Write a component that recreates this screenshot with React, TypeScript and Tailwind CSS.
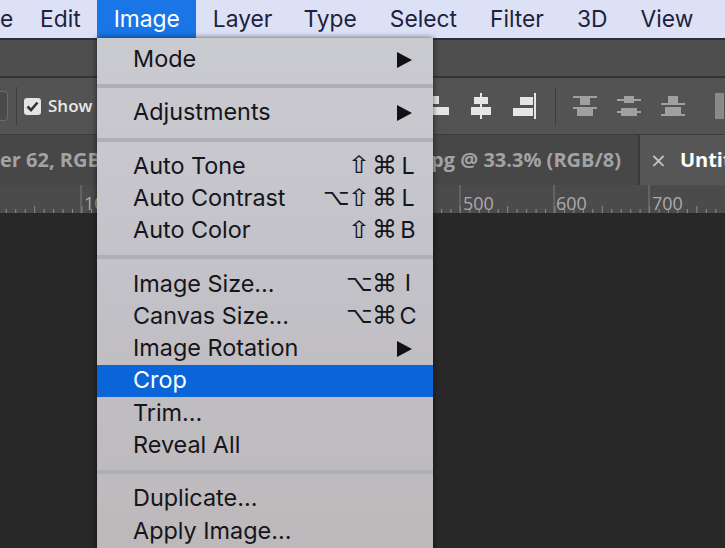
import React from 'react';

const Arrow: React.FC = () => (
  <svg width="15" height="16" viewBox="0 0 15 16" className="shrink-0">
    <path d="M0 0 L15 8 L0 16 Z" fill="#111" />
  </svg>
);

const KeyGlyph: React.FC<{ k: string }> = ({ k }) => {
  if (k === '⌥') return <span className="w-[22px] text-center font-['DejaVu_Sans',sans-serif] text-[23px]">⌥</span>;
  if (k === '⇧') return <span className="w-[19px] scale-x-[1.15] text-center font-['DejaVu_Sans',sans-serif] text-[24px]">⇧</span>;
  if (k === '⌘') return <span className="w-[22px] text-center font-['DejaVu_Sans',sans-serif] text-[25px]">⌘</span>;
  return <span className="ml-[1px] w-[18px] text-center">{k}</span>;
};

const MenuRow: React.FC<{ label: string; keys?: string; arrow?: boolean; active?: boolean }> = ({
  label,
  keys,
  arrow,
  active,
}) => (
  <div
    className={`flex h-[32.3px] items-center justify-between pb-[2px] pl-[36px] pr-[16px] ${
      active ? 'bg-[#0a66d8] text-white' : 'text-[#15151a]'
    }`}
  >
    <span>{label}</span>
    {keys && (
      <span className="flex items-center gap-[4px] leading-none">
        {Array.from(keys).map((k, i) => (
          <KeyGlyph key={i} k={k} />
        ))}
      </span>
    )}
    {arrow && (
      <span className="mt-[3px] pr-[5px]">
        <Arrow />
      </span>
    )}
  </div>
);

const Sep: React.FC = () => (
  <div className="flex h-[21px] items-center">
    <div className="h-[4px] w-full bg-[#aeafb4]" />
  </div>
);

const AlignIcon: React.FC<{ kind: string; bright?: boolean }> = ({ kind, bright }) => {
  const c = bright ? '#e6e6e6' : '#a0a0a0';
  if (kind === 'left') {
    return (
      <svg width="24" height="26" viewBox="0 0 24 26" className="shrink-0">
        <rect x="0" y="3" width="14" height="8" fill={c} />
        <rect x="0" y="14" width="24" height="8" fill={c} />
      </svg>
    );
  }
  if (kind === 'center') {
    return (
      <svg width="20" height="26" viewBox="0 0 20 26" className="shrink-0">
        <rect x="9" y="0" width="2" height="26" fill={c} />
        <rect x="3" y="4" width="14" height="7" fill={c} />
        <rect x="0" y="14" width="20" height="8" fill={c} />
      </svg>
    );
  }
  if (kind === 'right') {
    return (
      <svg width="23" height="26" viewBox="0 0 23 26" className="shrink-0">
        <rect x="21" y="0" width="2" height="26" fill={c} />
        <rect x="7" y="4" width="13" height="8" fill={c} />
        <rect x="0" y="15" width="20" height="8" fill={c} />
      </svg>
    );
  }
  if (kind === 'top') {
    return (
      <svg width="24" height="20" viewBox="0 0 24 20" className="shrink-0">
        <rect x="0" y="0" width="24" height="2" fill={c} />
        <rect x="7" y="2" width="10" height="7" fill={c} />
        <rect x="0" y="11" width="24" height="2" fill={c} />
        <rect x="4" y="13" width="16" height="7" fill={c} />
      </svg>
    );
  }
  if (kind === 'middle') {
    return (
      <svg width="24" height="20" viewBox="0 0 24 20" className="shrink-0">
        <rect x="7" y="0" width="10" height="7" fill={c} />
        <rect x="0" y="3" width="24" height="2" fill={c} />
        <rect x="4" y="12" width="16" height="8" fill={c} />
        <rect x="0" y="15" width="24" height="2" fill={c} />
      </svg>
    );
  }
  return (
    <svg width="24" height="20" viewBox="0 0 24 20" className="shrink-0">
      <rect x="7" y="0" width="10" height="7" fill={c} />
      <rect x="0" y="7" width="24" height="2" fill={c} />
      <rect x="4" y="11" width="16" height="7" fill={c} />
      <rect x="0" y="18" width="24" height="2" fill={c} />
    </svg>
  );
};

const rulerTicks = Array.from({ length: 76 }, (_, i) => i * 9.46 + 6);

const Ruler: React.FC = () => (
  <svg width="725" height="28" viewBox="0 0 725 28" className="block">
    {rulerTicks.map((x, i) => (
      <line
        key={i}
        x1={x + 0.3}
        x2={x + 0.3}
        y1={i % 5 === 3 ? 21 : 24}
        y2="28"
        stroke="#8d8d8d"
        strokeWidth="1"
      />
    ))}
    {[81, 460, 554, 649].map((x) => (
      <line key={x} x1={x} x2={x} y1="0" y2="28" stroke="#7d7d7d" strokeWidth="1" />
    ))}
    <g fill="#aaaaaa" fontSize="18" fontFamily="Open Sans, sans-serif">
      <text x="84" y="25">10</text>
      <text x="463" y="25">500</text>
      <text x="556" y="25">600</text>
      <text x="652" y="25">700</text>
    </g>
  </svg>
);

export default function App() {
  const menus = ['Edit', 'Image', 'Layer', 'Type', 'Select', 'Filter', '3D', 'View'];

  return (
    <div className="relative h-[548px] w-[725px] overflow-hidden bg-[#282828] font-['Inter',sans-serif]">
      {/* mac menu bar */}
      <div className="flex h-[38px] items-stretch bg-[#dde1f5] text-[22.8px] leading-[38px] text-[#1d2140]">
        <div className="w-[23.5px] shrink-0 overflow-hidden whitespace-nowrap text-right">
          <span className="pr-[17px]">e</span>
        </div>
        {menus.map((m) => (
          <div
            key={m}
            className={`shrink-0 whitespace-nowrap pl-[16.5px] ${m === 'Layer' ? 'pr-[14.5px]' : 'pr-[16.5px]'} ${
              m === 'Image' ? 'bg-[#1a76e6] text-white' : ''
            }`}
          >
            {m}
          </div>
        ))}
      </div>

      {/* app title strip */}
      <div className="h-[40px] border-b-2 border-[#333] border-t-2 border-t-[#2d2f3a] bg-[#4e4e4e]" />

      {/* options bar */}
      <div className="flex h-[57px] items-center overflow-hidden border-b border-[#3c3c3c] bg-[#535353]">
        <div className="h-[30px] w-[8px] shrink-0 rounded-r-[4px] border border-l-0 border-[#6b6b6b] bg-[#4a4a4a]" />
        <div className="ml-[8px] h-[38px] w-px shrink-0 bg-[#3d3d3d]" />
        <div className="ml-[7px] flex h-[17px] w-[17px] shrink-0 items-center justify-center rounded-[3px] bg-[#e4e4e4]">
          <svg width="13" height="11" viewBox="0 0 13 11">
            <path d="M1.5 5.5 L5 9 L11.5 1.5" fill="none" stroke="#333" strokeWidth="2.6" />
          </svg>
        </div>
        <span className="ml-[7px] w-[44px] shrink-0 font-['Open_Sans',sans-serif] text-[17px] font-semibold text-[#e8e8e8]">Show</span>
        <div className="ml-[333px] flex shrink-0 items-center gap-[22px]">
          <AlignIcon kind="left" bright />
          <AlignIcon kind="center" bright />
          <AlignIcon kind="right" bright />
        </div>
        <div className="ml-[19px] h-[38px] w-px shrink-0 bg-[#3d3d3d]" />
        <div className="ml-[17px] flex shrink-0 items-center gap-[20px]">
          <AlignIcon kind="top" />
          <AlignIcon kind="middle" />
          <AlignIcon kind="bottom" />
        </div>
        <div className="ml-[30px] h-[26px] w-[9px] shrink-0 bg-[#8a8a8a]" />
      </div>

      {/* tabs */}
      <div className="flex h-[50px] items-stretch bg-[#474747] font-['Open_Sans',sans-serif] text-[20px] font-bold">
        <div className="flex w-[640px] shrink-0 items-center justify-between border-r-2 border-[#3a3a3a] pr-[17px] text-[#a3a3a3]">
          <span className="whitespace-nowrap">er 62, RGB</span>
          <span className="whitespace-nowrap">pg @ 33.3% (RGB/8)</span>
        </div>
        <div className="flex flex-1 items-center overflow-hidden bg-[#565656]">
          <span className="ml-[11px] text-[26px] font-normal leading-none text-[#c4c4c4]">×</span>
          <span className="ml-[14px] whitespace-nowrap text-white">Untitled-1</span>
        </div>
      </div>

      {/* ruler */}
      <div className="h-[28px] bg-[#4b4b4b]">
        <Ruler />
      </div>

      {/* open dropdown */}
      <div className="absolute left-[97px] top-[38px] w-[336px] bg-gradient-to-b from-[#cacbd1] via-[#c2c1c7] to-[#bdb8ba] pb-[10px] pt-[5.5px] text-[23.4px] shadow-[0_0_6px_rgba(0,0,0,0.6)]">
        <MenuRow label="Mode" arrow />
        <Sep />
        <MenuRow label="Adjustments" arrow />
        <Sep />
        <MenuRow label="Auto Tone" keys="⇧⌘L" />
        <MenuRow label="Auto Contrast" keys="⌥⇧⌘L" />
        <MenuRow label="Auto Color" keys="⇧⌘B" />
        <Sep />
        <MenuRow label="Image Size..." keys="⌥⌘I" />
        <MenuRow label="Canvas Size..." keys="⌥⌘C" />
        <MenuRow label="Image Rotation" arrow />
        <MenuRow label="Crop" active />
        <MenuRow label="Trim..." />
        <MenuRow label="Reveal All" />
        <Sep />
        <MenuRow label="Duplicate..." />
        <MenuRow label="Apply Image..." />
      </div>
    </div>
  );
}
